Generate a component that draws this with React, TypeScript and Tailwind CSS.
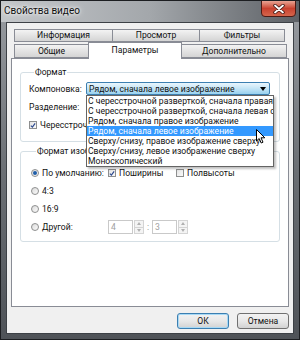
import React from "react";

const TOP_TABS = [
  { label: "Информация", w: "w-[99px]" },
  { label: "Просмотр", w: "w-[88px]" },
  { label: "Фильтры", w: "w-[86px]" },
];

const LIST_ITEMS = [
  "С чересстрочной разверткой, сначала правая строка",
  "С чересстрочной разверткой, сначала левая строка",
  "Рядом, сначала правое изображение",
  "Рядом, сначала левое изображение",
  "Сверху/снизу, правое изображение сверху",
  "Сверху/снизу, левое изображение сверху",
  "Моноскопический",
];

function Tab({ label, w }: { label: string; w: string }) {
  return (
    <div
      className={`${w} h-[13px] -ml-px first:ml-0 flex items-center justify-center border border-[#898c95] bg-linear-to-b from-[#f3f3f3] to-[#d4d4d4] leading-none`}
    >
      {label}
    </div>
  );
}

function Checkbox({ checked }: { checked?: boolean }) {
  return (
    <span className="w-[8px] h-[8px] shrink-0 border border-[#8e8f8f] bg-linear-to-br from-[#e4e4e4] to-[#fafafa] flex items-center justify-center">
      {checked && (
        <svg width="7" height="7" viewBox="0 0 7 7">
          <path d="M1 3.6 L2.8 5.4 L6 1" stroke="#2e4a8f" strokeWidth="1.4" fill="none" />
        </svg>
      )}
    </span>
  );
}

function Radio({ checked }: { checked?: boolean }) {
  return (
    <span className="w-[8px] h-[8px] shrink-0 rounded-full border border-[#8e8f8f] bg-linear-to-br from-[#dcdcdc] to-[#fbfbfb] flex items-center justify-center">
      {checked && <span className="w-[4px] h-[4px] rounded-full bg-[#1f5ea8]" />}
    </span>
  );
}

function Spin({ value }: { value: string }) {
  return (
    <div className="flex items-center h-[14px]">
      <div className="w-[25px] h-[14px] border border-[#c9c9c9] bg-white text-[#a0a0a0] pl-[2px] flex items-center">
        {value}
      </div>
      <div className="w-[10px] h-[14px] ml-px flex flex-col">
        <div className="flex-1 border border-[#d4d4d4] bg-[#f4f4f4] flex items-center justify-center">
          <svg width="4" height="3" viewBox="0 0 4 3"><path d="M0 3 L2 0 L4 3Z" fill="#b0b0b0" /></svg>
        </div>
        <div className="flex-1 -mt-px border border-[#d4d4d4] bg-[#f4f4f4] flex items-center justify-center">
          <svg width="4" height="3" viewBox="0 0 4 3"><path d="M0 0 L2 3 L4 0Z" fill="#b0b0b0" /></svg>
        </div>
      </div>
    </div>
  );
}

export default function App() {
  return (
    <div className="w-[300px] h-[340px] relative overflow-hidden border border-[#1c1e21] bg-linear-to-b from-[#9a9ea3] via-[#6b6f74] to-[#4f5358] font-['Roboto',sans-serif] text-[8.6px] text-[#111] select-none whitespace-nowrap">
      {/* Title bar */}
      <div className="h-[21px] flex items-start bg-linear-to-r from-[#c4c7ca] via-[#a3a7ab] to-[#5d6166]">
        <div className="pl-[3px] pt-[4px] text-[10px] leading-[12px] [text-shadow:0_0_6px_#ffffff,0_0_3px_#ffffff]">
          Свойства видео
        </div>
        <div className="ml-auto mr-[3px] -mt-px w-[35px] h-[17px] rounded-b-[4px] border border-[#4d1a14] bg-linear-to-b from-[#e8a393] via-[#c8412f] to-[#d5654c] flex items-center justify-center">
          <svg width="12" height="10" viewBox="0 0 12 10">
            <path d="M2 1.5 L10 8.5 M10 1.5 L2 8.5" stroke="#3a1410" strokeWidth="3.4" strokeLinecap="round" />
            <path d="M2 1.5 L10 8.5 M10 1.5 L2 8.5" stroke="#ffffff" strokeWidth="1.8" strokeLinecap="round" />
          </svg>
        </div>
      </div>

      {/* Client area */}
      <div className="ml-[5px] w-[288px] h-[312px] border border-[#3d4146] bg-[#f0f0f0] flex flex-col">
        {/* Tabs */}
        <div className="pt-[6px] pl-[7px] flex flex-col">
          <div className="flex">
            {TOP_TABS.map((t) => (
              <Tab key={t.label} label={t.label} w={t.w} />
            ))}
          </div>
          <div className="flex items-end -mt-px relative z-10 h-[17px]">
            <div className="w-[75px] h-[14px] flex items-center justify-center border border-[#898c95] bg-linear-to-b from-[#f3f3f3] to-[#d4d4d4] leading-none">
              Общие
            </div>
            <div className="w-[94px] h-[17px] -ml-px -mb-px flex items-center justify-center border border-b-0 border-[#898c95] bg-white leading-none pb-[2px]">
              Параметры
            </div>
            <div className="w-[106px] h-[14px] -ml-px flex items-center justify-center border border-[#898c95] bg-linear-to-b from-[#f3f3f3] to-[#d4d4d4] leading-none">
              Дополнительно
            </div>
          </div>
        </div>

        {/* Panel */}
        <div className="ml-[4px] w-[278px] h-[249px] border border-[#898c95] bg-white pt-[7px] pl-[8px] leading-[12px]">
          <fieldset className="w-[260px] border border-[#d5dfe5] rounded-[3px] pl-[8px] pb-[10px]">
            <legend className="ml-[5px] px-[1px] leading-[12px]">Формат</legend>
            <div className="mt-[4px] flex items-center h-[13px]">
              <span className="w-[57px]">Компоновка:</span>
              <div className="relative w-[184px] h-[13px]">
                <div className="h-full border border-[#3c7fb1] rounded-[2px] bg-linear-to-b from-[#eaf6fd] via-[#c4e5f6] to-[#98d1ef] flex items-center pl-[2px]">
                  <span className="flex-1">Рядом, сначала левое изображение</span>
                  <svg width="6" height="4" viewBox="0 0 6 4" className="mr-[3px]">
                    <path d="M0 0 L6 0 L3 4Z" fill="#000" />
                  </svg>
                </div>
                {/* Open dropdown list */}
                <div className="absolute left-0 top-[13px] z-20 w-[188px] border border-[#646464] bg-white overflow-hidden shadow-[2px_2px_2px_rgba(0,0,0,0.25)]">
                  {LIST_ITEMS.map((item, i) => (
                    <div
                      key={item}
                      className={`h-[10px] leading-[10px] pl-[1px] ${i === 3 ? "bg-[#3399ff] text-white" : ""}`}
                    >
                      {item}
                    </div>
                  ))}
                </div>
              </div>
            </div>
            <div className="mt-[5px] flex items-center h-[13px]">
              <span className="w-[57px]">Разделение:</span>
              <div className="w-[184px] h-[13px] border border-[#acacac] rounded-[2px] bg-[#f0f0f0]" />
            </div>
            <div className="mt-[6px] flex items-center gap-[3px] h-[12px]">
              <Checkbox checked />
              <span>Чересстрочный режим</span>
            </div>
          </fieldset>

          <fieldset className="mt-[3px] w-[260px] border border-[#d5dfe5] rounded-[3px] pl-[10px] pb-[8px]">
            <legend className="ml-[5px] px-[1px] leading-[12px]">Формат изображения</legend>
            <div className="mt-[10px] flex flex-col gap-[6px]">
              <div className="flex items-center h-[12px]">
                <div className="w-[77px] flex items-center gap-[3px]">
                  <Radio checked />
                  <span>По умолчанию:</span>
                </div>
                <div className="w-[68px] flex items-center gap-[3px]">
                  <Checkbox checked />
                  <span>Поширины</span>
                </div>
                <div className="flex items-center gap-[3px]">
                  <Checkbox />
                  <span>Полвысоты</span>
                </div>
              </div>
              <div className="flex items-center gap-[3px] h-[12px]">
                <Radio />
                <span>4:3</span>
              </div>
              <div className="flex items-center gap-[3px] h-[12px]">
                <Radio />
                <span>16:9</span>
              </div>
              <div className="flex items-center h-[12px]">
                <div className="w-[77px] flex items-center gap-[3px]">
                  <Radio />
                  <span>Другой:</span>
                </div>
                <Spin value="4" />
                <span className="mx-[3px] text-[#808080]">:</span>
                <Spin value="3" />
              </div>
            </div>
          </fieldset>
        </div>

        {/* Buttons */}
        <div className="mt-[6px] flex justify-end gap-[8px] pr-[4px]">
          <button className="w-[52px] h-[16px] rounded-[3px] border border-[#3c7fb1] bg-linear-to-b from-[#f2f2f2] via-[#e8e8e8] to-[#d2d2d2] shadow-[inset_0_0_0_1px_#a8d9f5] leading-none">
            ОК
          </button>
          <button className="w-[52px] h-[16px] rounded-[3px] border border-[#707070] bg-linear-to-b from-[#f2f2f2] via-[#e8e8e8] to-[#d2d2d2] leading-none">
            Отмена
          </button>
        </div>
      </div>

      {/* Mouse pointer */}
      <svg className="absolute left-[255px] top-[128px] z-30" width="11" height="15" viewBox="0 0 11 15">
        <path d="M0.5 0.5 L0.5 12 L3.2 9.5 L5.2 14 L7 13.2 L5 8.8 L8.8 8.8 Z" fill="#fff" stroke="#000" strokeWidth="1" strokeLinejoin="round" />
      </svg>
    </div>
  );
}
